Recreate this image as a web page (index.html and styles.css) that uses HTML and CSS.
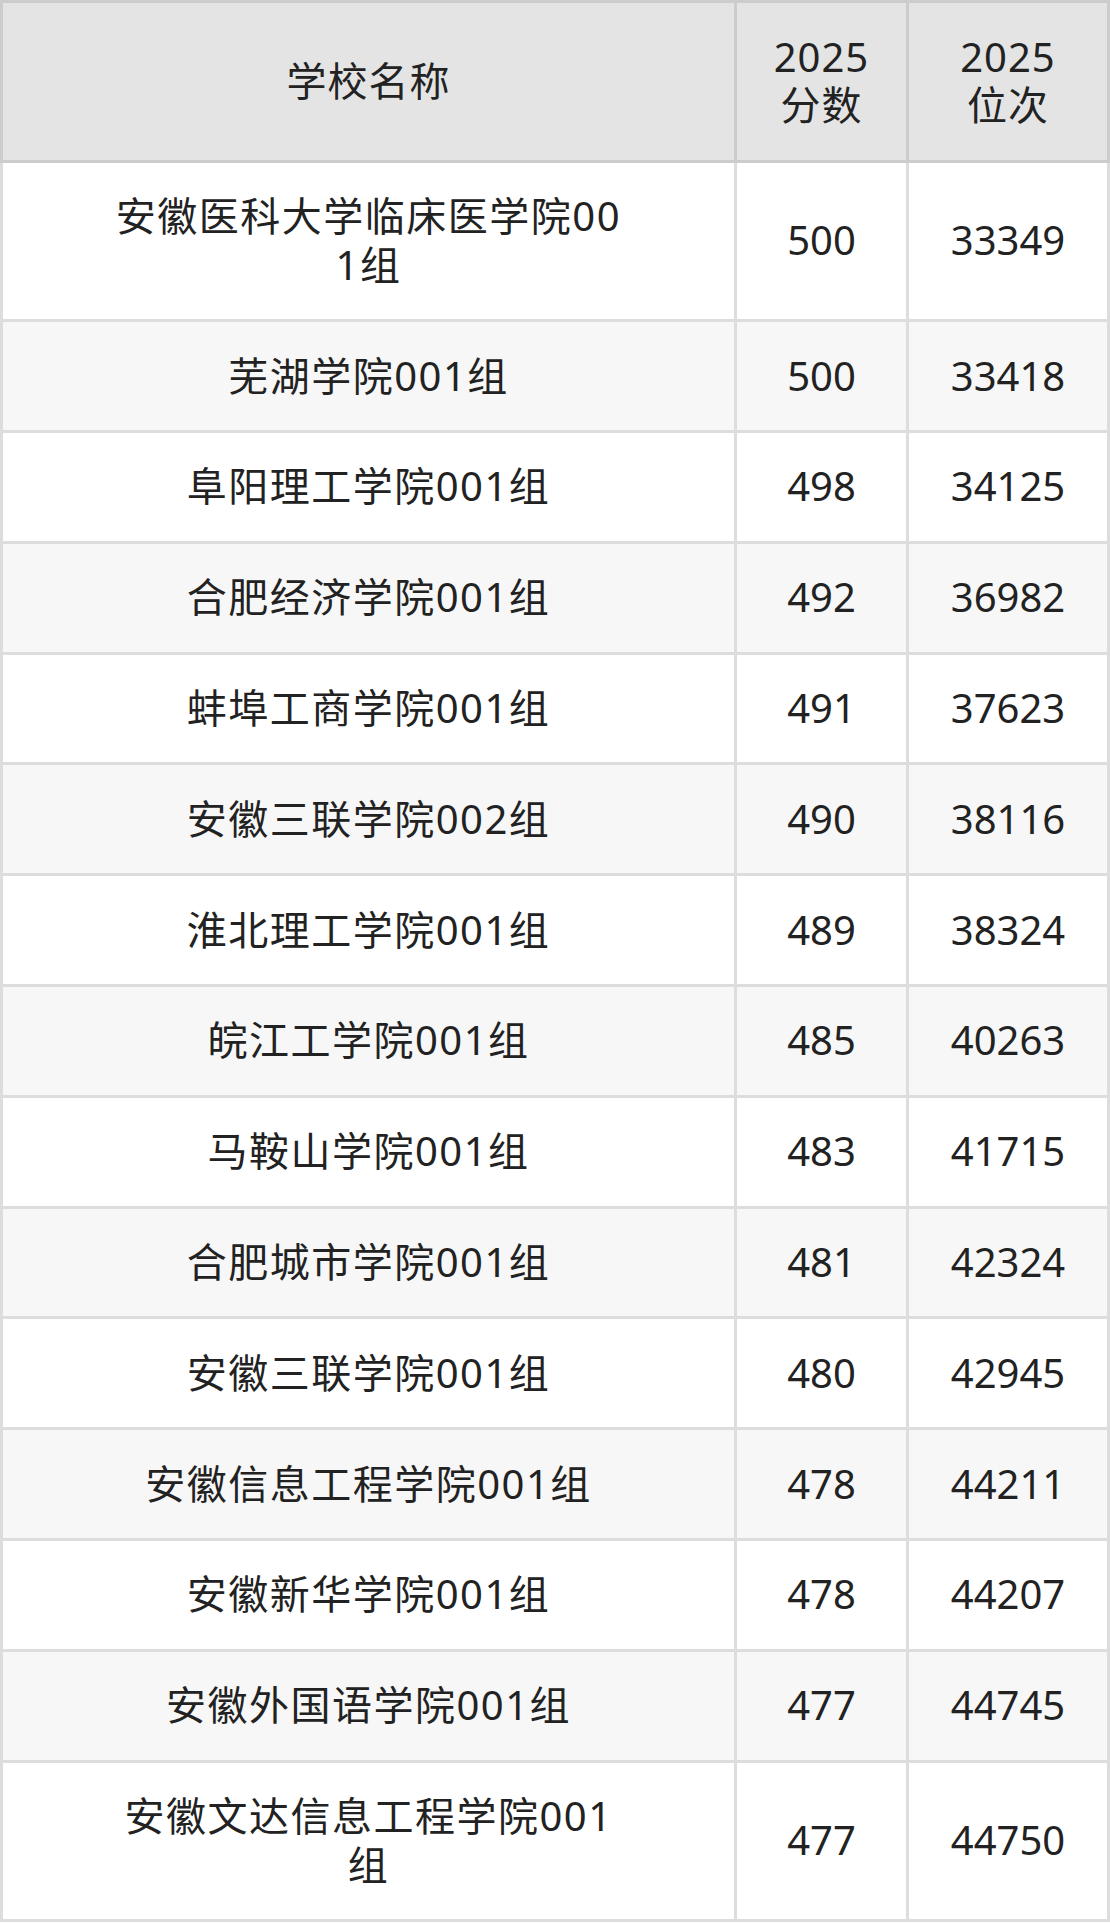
FILE: index.html
```html
<!DOCTYPE html>
<html lang="zh">
<head>
<meta charset="utf-8">
<link rel="stylesheet" href="styles.css">
<title>分数位次</title>
</head>
<body>
<table class="score-table">
  <thead>
    <tr>
      <th class="col-name">学校名称</th>
      <th class="col-score">2025<br>分数</th>
      <th class="col-rank">2025<br>位次</th>
    </tr>
  </thead>
  <tbody>
    <tr><td class="name">安徽医科大学临床医学院001组</td><td>500</td><td>33349</td></tr>
    <tr><td class="name">芜湖学院001组</td><td>500</td><td>33418</td></tr>
    <tr><td class="name">阜阳理工学院001组</td><td>498</td><td>34125</td></tr>
    <tr><td class="name">合肥经济学院001组</td><td>492</td><td>36982</td></tr>
    <tr><td class="name">蚌埠工商学院001组</td><td>491</td><td>37623</td></tr>
    <tr><td class="name">安徽三联学院002组</td><td>490</td><td>38116</td></tr>
    <tr><td class="name">淮北理工学院001组</td><td>489</td><td>38324</td></tr>
    <tr><td class="name">皖江工学院001组</td><td>485</td><td>40263</td></tr>
    <tr><td class="name">马鞍山学院001组</td><td>483</td><td>41715</td></tr>
    <tr><td class="name">合肥城市学院001组</td><td>481</td><td>42324</td></tr>
    <tr><td class="name">安徽三联学院001组</td><td>480</td><td>42945</td></tr>
    <tr><td class="name">安徽信息工程学院001组</td><td>478</td><td>44211</td></tr>
    <tr><td class="name">安徽新华学院001组</td><td>478</td><td>44207</td></tr>
    <tr><td class="name">安徽外国语学院001组</td><td>477</td><td>44745</td></tr>
    <tr><td class="name">安徽文达信息工程学院001组</td><td>477</td><td>44750</td></tr>
  </tbody>
</table>
</body>
</html>
```

FILE: styles.css
```css
html, body {
  margin: 0;
  padding: 0;
  background: #ffffff;
}

.score-table {
  width: 1110px;
  border-collapse: separate;
  border-spacing: 0;
  table-layout: fixed;
  font-family: "Noto Sans", "Noto Sans CJK SC", sans-serif;
  font-size: 40px;
  line-height: 48.8px;
  color: #222222;
}

.score-table th,
.score-table td {
  box-sizing: border-box;
  text-align: center;
  vertical-align: middle;
  padding: 29.5px 0;
  font-weight: 400;
  border-right: 3px solid #dddddd;
  border-bottom: 3px solid #dddddd;
  word-break: break-all;
}

.score-table th {
  background: #e4e4e4;
  border-top: 3px solid #cccccc;
  border-right-color: #cccccc;
  border-bottom-color: #cccccc;
  letter-spacing: 1px;
}

.score-table th:first-child,
.score-table td:first-child {
  border-left: 3px solid #dddddd;
}

.score-table th:first-child {
  border-left-color: #cccccc;
}

.col-name { width: 737px; }
.col-score { width: 172px; }
.col-rank { width: 201px; }

.score-table td.name {
  padding-left: 106px;
  padding-right: 106px;
  letter-spacing: 1.5px;
}

.score-table tbody tr:nth-child(even) td {
  background: #f7f7f7;
}
```
